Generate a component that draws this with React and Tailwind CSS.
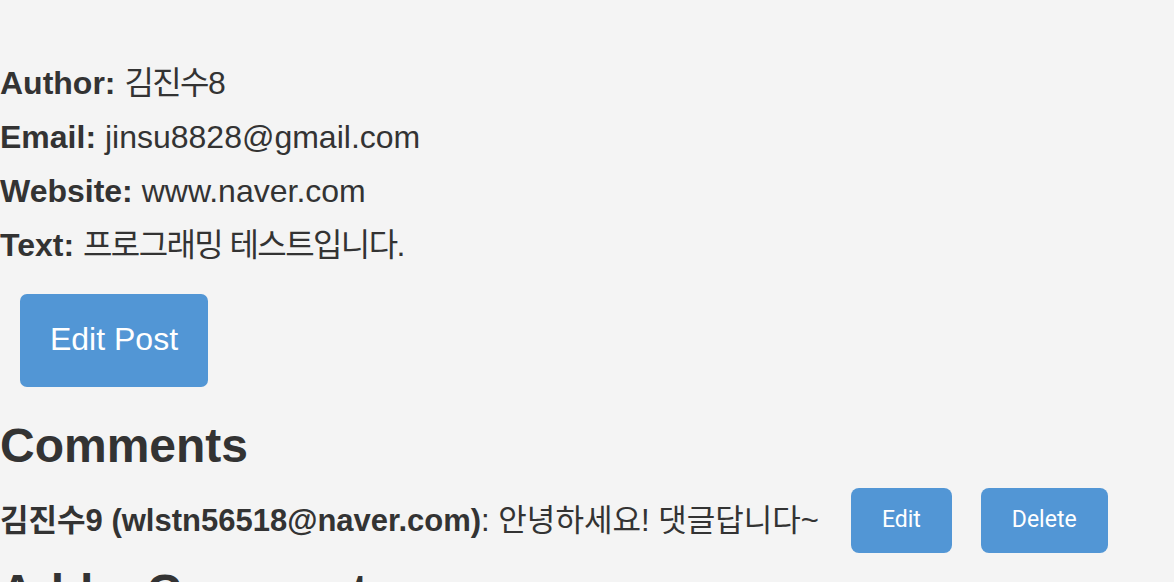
import React from 'react';

const post = {
  author: '김진수8',
  email: 'jinsu8828@gmail.com',
  website: 'www.naver.com',
  text: '프로그래밍 테스트입니다.',
};

const comments = [
  { id: 1, author: '김진수9', email: 'wlstn56518@naver.com', text: '안녕하세요! 댓글답니다~' },
];

function Field({ label, value, korean, last }) {
  return (
    <p className={`text-[32px] leading-[36px] ${last ? 'mb-[31px]' : 'mb-[18px]'}`}>
      <strong className="font-bold">{label}:</strong>{' '}
      <span className={korean ? 'tracking-[-0.05em]' : ''}>{value}</span>
    </p>
  );
}

export default function App() {
  return (
    <div className="min-h-screen bg-[#f4f4f4] text-[#333] font-['Liberation_Sans','Noto_Sans_CJK_KR',sans-serif] pt-[65px]">
      <Field label="Author" value={post.author} korean />
      <Field label="Email" value={post.email} />
      <Field label="Website" value={post.website} />
      <Field label="Text" value={post.text} korean last />

      <button className="ml-[20px] w-[188px] h-[93px] pb-[4px] rounded-[7px] bg-[#5296d5] text-white text-[32px] leading-none flex items-center justify-center">
        Edit Post
      </button>

      <h2 className="mt-[31px] text-[48px] leading-[55px] font-bold">Comments</h2>

      {comments.map((c) => (
        <div key={c.id} className="mt-[15px] h-[65px] flex items-center">
          <span className="text-[31px] leading-[36px]">
            <strong className="font-bold">
              {c.author} ({c.email})
            </strong>
            : {c.text}
          </span>
          <button className="ml-[32px] h-[65px] px-[31px] rounded-[8px] bg-[#5296d5] text-white text-[23px] font-['Roboto',sans-serif]">
            Edit
          </button>
          <button className="ml-[29px] h-[65px] px-[31px] rounded-[8px] bg-[#5296d5] text-white text-[23px] font-['Roboto',sans-serif]">
            Delete
          </button>
        </div>
      ))}

      <h2 className="mt-[11px] text-[48px] leading-[55px] font-bold">Add a Comment</h2>
    </div>
  );
}
